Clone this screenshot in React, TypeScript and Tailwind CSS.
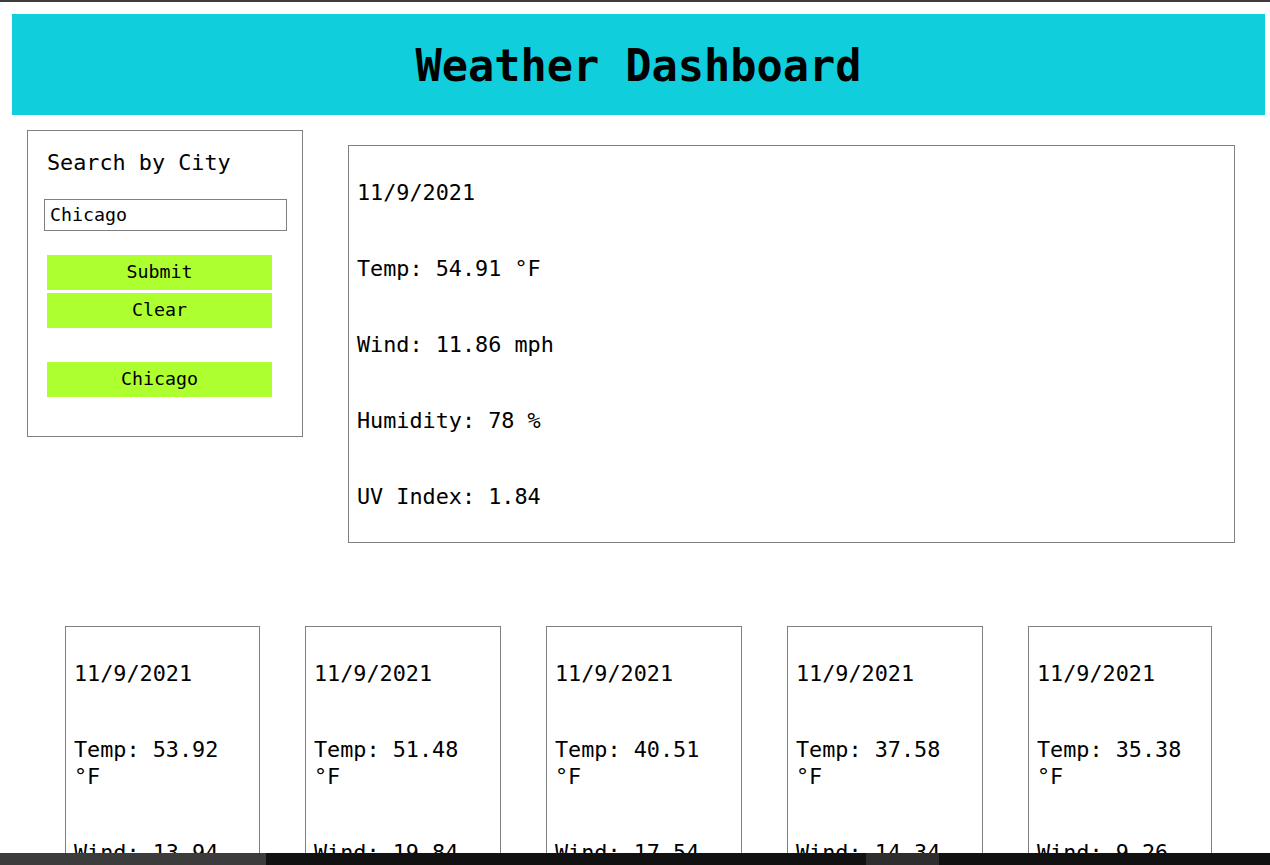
import React from 'react';

const mono = { fontFamily: '"DejaVu Sans Mono", "Liberation Mono", monospace' };

interface Day {
  date: string;
  temp: string;
  wind: string;
  humidity: string;
  uv?: string;
}

const current: Day = { date: '11/9/2021', temp: '54.91', wind: '11.86', humidity: '78', uv: '1.84' };

const forecast: (Day & { w: string })[] = [
  { date: '11/9/2021', temp: '53.92', wind: '13.94', humidity: '70', w: 'w-[195px]' },
  { date: '11/9/2021', temp: '51.48', wind: '19.84', humidity: '66', w: 'w-[196px]' },
  { date: '11/9/2021', temp: '40.51', wind: '17.54', humidity: '59', w: 'w-[196px]' },
  { date: '11/9/2021', temp: '37.58', wind: '14.34', humidity: '62', w: 'w-[196px]' },
  { date: '11/9/2021', temp: '35.38', wind: '9.26', humidity: '68', w: 'w-[184px]' },
];

const GreenButton: React.FC<{ label: string; className?: string }> = ({ label, className = '' }) => (
  <button
    type="button"
    className={`w-[225px] h-[35px] bg-[#adff2f] text-black text-[18.3px] leading-none flex items-center justify-center ${className}`}
  >
    {label}
  </button>
);

export default function App() {
  return (
    <div className="h-[865px] w-[1270px] flex flex-col bg-white text-black overflow-hidden" style={mono}>
      <div className="h-[2px] bg-[#3c3c3c] shrink-0" />

      <div className="flex-1 overflow-hidden">
        {/* header */}
        <div className="ml-[12px] mr-[5px] mt-[12px] h-[101px] bg-[#10cedb] flex items-center justify-center">
          <h1 className="text-[43.6px] font-bold leading-none pt-[5px]">Weather Dashboard</h1>
        </div>

        <div className="flex items-start mt-[15px]">
          {/* search panel */}
          <div className="ml-[27px] w-[276px] h-[307px] border border-[#808080] flex flex-col pl-[16px]">
            <h2 className="text-[21.8px] leading-none mt-[21px] ml-[3px]">Search by City</h2>
            <input
              defaultValue="Chicago"
              className="mt-[25px] w-[243px] h-[32px] border border-[#808080] px-[5px] text-[18.3px] outline-none"
            />
            <GreenButton label="Submit" className="mt-[24px] ml-[3px]" />
            <GreenButton label="Clear" className="mt-[3px] ml-[3px]" />
            <GreenButton label="Chicago" className="mt-[34px] ml-[3px]" />
          </div>

          {/* current weather */}
          <div className="ml-[45px] mt-[15px] w-[887px] border border-[#808080] flex flex-col gap-[49px] px-2 py-[32.5px] text-[21.8px] leading-[27px]">
            <p>{current.date}</p>
            <p>Temp: {current.temp} °F</p>
            <p>Wind: {current.wind} mph</p>
            <p>Humidity: {current.humidity} %</p>
            <p>UV Index: {current.uv}</p>
          </div>
        </div>

        {/* 5 day forecast */}
        <div className="flex items-start gap-[45px] pl-[65px] mt-[83px]">
          {forecast.map((d, i) => (
            <div
              key={i}
              className={`${d.w} shrink-0 border border-[#808080] flex flex-col gap-[49px] px-2 py-[32.5px] text-[21.8px] leading-[27px]`}
            >
              <p>{d.date}</p>
              <p>Temp: {d.temp} °F</p>
              <p>Wind: {d.wind} mph</p>
              <p>Humidity: {d.humidity} %</p>
            </div>
          ))}
        </div>
      </div>

      {/* bottom scrollbar strip */}
      <div className="h-[12px] shrink-0 flex bg-[#111111]">
        <div className="w-[266px] bg-[#3c3c3c]" />
        <div className="w-[600px]" />
        <div className="w-[73px] bg-[#2e2e2e]" />
      </div>
    </div>
  );
}
